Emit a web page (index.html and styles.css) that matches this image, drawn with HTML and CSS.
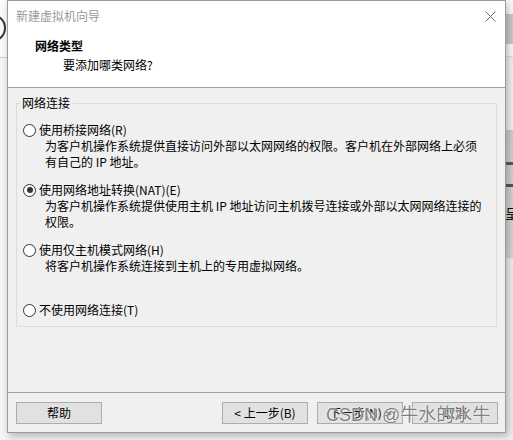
FILE: index.html
```html
<!DOCTYPE html>
<html lang="zh-CN">
<head>
<meta charset="utf-8">
<title>新建虚拟机向导</title>
<link rel="stylesheet" href="styles.css">
</head>
<body>
<div class="desktop">
  <div class="bg-left">
    <div class="bg-left-top"><span class="bg-circle"></span></div>
    <div class="bg-left-rest"></div>
  </div>
  <div class="bg-right">
    <div class="br-a"></div>
    <div class="br-b"></div>
    <div class="br-c"></div>
    <div class="br-d"></div>
    <div class="br-e">
      <div class="br-gap1"></div>
      <div class="br-line"></div>
      <div class="br-gap2"></div>
      <div class="br-line"></div>
      <div class="br-text">呈</div>
    </div>
    <div class="br-f"></div>
  </div>

  <div class="dialog">
    <div class="header">
      <div class="titlebar">
        <span class="title">新建虚拟机向导</span>
        <svg class="close" width="11" height="11" viewBox="0 0 11 11"><path d="M0.5 0.5 L10.5 10.5 M10.5 0.5 L0.5 10.5" stroke="#6a6a6a" stroke-width="1" fill="none"/></svg>
      </div>
      <div class="head-title">网络类型</div>
      <div class="head-sub">要添加哪类网络?</div>
    </div>

    <div class="body">
      <fieldset class="group">
        <legend>网络连接</legend>
        <div class="option">
          <div class="opt-label"><span class="radio"></span>使用桥接网络(R)</div>
          <div class="opt-desc">为客户机操作系统提供直接访问外部以太网网络的权限。客户机在外部网络上必须<br>有自己的 IP 地址。</div>
        </div>
        <div class="option">
          <div class="opt-label"><span class="radio checked"></span>使用网络地址转换(NAT)(E)</div>
          <div class="opt-desc">为客户机操作系统提供使用主机 IP 地址访问主机拨号连接或外部以太网网络连接的<br>权限。</div>
        </div>
        <div class="option">
          <div class="opt-label"><span class="radio"></span>使用仅主机模式网络(H)</div>
          <div class="opt-desc">将客户机操作系统连接到主机上的专用虚拟网络。<br>&nbsp;</div>
        </div>
        <div class="option last">
          <div class="opt-label"><span class="radio"></span>不使用网络连接(T)</div>
        </div>
      </fieldset>
    </div>

    <div class="footer">
      <button class="btn">帮助</button>
      <div class="spacer"></div>
      <button class="btn">&lt; 上一步(B)</button>
      <button class="btn">下一步(N) &gt;</button>
      <button class="btn">取消</button>
    </div>
  </div>

  <div class="watermark">CSDN @牛水的水牛</div>
</div>
</body>
</html>
```

FILE: styles.css
```css
html, body {
  margin: 0;
  padding: 0;
}
body {
  width: 513px;
  height: 440px;
  overflow: hidden;
  font-family: "Noto Sans CJK SC", "Microsoft YaHei", sans-serif;
  font-size: 12px;
  color: #000;
  background: #f4f4f4;
}
.desktop {
  position: relative;
  width: 513px;
  height: 440px;
  overflow: hidden;
}

/* background app, left strip */
.bg-left {
  position: absolute;
  left: 0;
  top: 0;
  width: 8px;
  height: 440px;
  display: flex;
  flex-direction: column;
}
.bg-left-top {
  position: relative;
  height: 57px;
  background: #fbfbfb;
  border-bottom: 1px solid #cfcfcf;
  overflow: hidden;
}
.bg-circle {
  position: absolute;
  left: -22px;
  top: 14px;
  width: 24px;
  height: 24px;
  border: 2px solid #3a3a3a;
  border-radius: 50%;
}
.bg-left-rest {
  flex: 1;
  background: #f7f7f7;
}

/* background app, right strip */
.bg-right {
  position: absolute;
  left: 505px;
  top: 0;
  width: 8px;
  height: 440px;
  display: flex;
  flex-direction: column;
  overflow: hidden;
}
.br-a { height: 14px; background: #fdfdfd; }
.br-b { height: 30px; background: #c8cbcb; }
.br-c { height: 12px; background: #fafafa; border-bottom: 1px solid #dedede; }
.br-d { height: 73px; background: #f3f3f3; }
.br-e {
  height: 128px;
  background: linear-gradient(#cfcfcf, #d6d6d6);
  display: flex;
  flex-direction: column;
}
.br-gap1 { height: 32px; }
.br-gap2 { height: 19px; }
.br-line { height: 3px; background: #4d5a67; }
.br-text {
  margin-top: 16px;
  margin-left: 0px;
  font-size: 14px;
  line-height: 20px;
  color: #111;
}
.br-f { flex: 1; background: #f0f0f0; }

/* dialog window */
.dialog {
  position: absolute;
  left: 7px;
  top: 0;
  width: 497px;
  height: 431px;
  border: 1px solid #9b9b9b;
  background: #f0f0f0;
  box-shadow: 2px 3px 8px rgba(0, 0, 0, 0.28);
  display: flex;
  flex-direction: column;
}
.header {
  height: 86px;
  background: #fff;
  border-bottom: 1px solid #a0a0a0;
  flex: none;
}
.titlebar {
  height: 30px;
  display: flex;
  align-items: center;
  justify-content: space-between;
  padding: 0 9px 0 8px;
}
.title {
  color: #9a9a9a;
  font-size: 12px;
  line-height: 16px;
}
.close {
  display: block;
}
.head-title {
  margin-top: 7px;
  padding-left: 27px;
  font-weight: 700;
  line-height: 16px;
}
.head-sub {
  margin-top: 3px;
  padding-left: 55px;
  line-height: 16px;
}

.body {
  flex: 1;
  padding: 7px 8px 0 8px;
}
.group {
  margin: 0;
  padding: 11px 0 8px 0;
  min-width: 0;
  border: 1px solid #dcdcdc;
}
.group legend {
  margin-left: 3px;
  padding: 0 3px 0 2px;
  line-height: 16px;
}
.option {
  height: 48px;
  margin-bottom: 12px;
}
.option.last {
  height: 16px;
  margin-bottom: 0;
}
.opt-label {
  display: flex;
  align-items: center;
  height: 16px;
  line-height: 16px;
  padding-left: 6px;
  white-space: nowrap;
}
.radio {
  width: 11px;
  height: 11px;
  border: 1px solid #333;
  border-radius: 50%;
  background: #fff;
  margin-right: 3px;
  position: relative;
  flex: none;
}
.radio.checked::after {
  content: "";
  position: absolute;
  left: 2.5px;
  top: 2.5px;
  width: 6px;
  height: 6px;
  border-radius: 50%;
  background: #333;
}
.opt-desc {
  padding-left: 28px;
  line-height: 16px;
  white-space: nowrap;
}

.footer {
  flex: none;
  height: 30px;
  border-top: 1px solid #a0a0a0;
  padding: 9px 7px 0 8px;
  display: flex;
  align-items: flex-start;
  gap: 9px;
}
.spacer {
  flex: 1;
}
.btn {
  width: 86px;
  height: 22px;
  margin: 0;
  padding: 0;
  border: 1px solid #adadad;
  background: #e1e1e1;
  font-family: "Noto Sans CJK SC", "Microsoft YaHei", sans-serif;
  font-size: 12px;
  line-height: 18px;
  color: #000;
}

.watermark {
  position: absolute;
  left: 326px;
  top: 404px;
  font-family: "Liberation Sans", "Noto Sans CJK SC", sans-serif;
  font-size: 18px;
  line-height: 22px;
  color: rgba(105, 105, 105, 0.85);
  text-shadow: 0 0 1px #fff, 0 0 2px #fff;
  white-space: nowrap;
}
```
